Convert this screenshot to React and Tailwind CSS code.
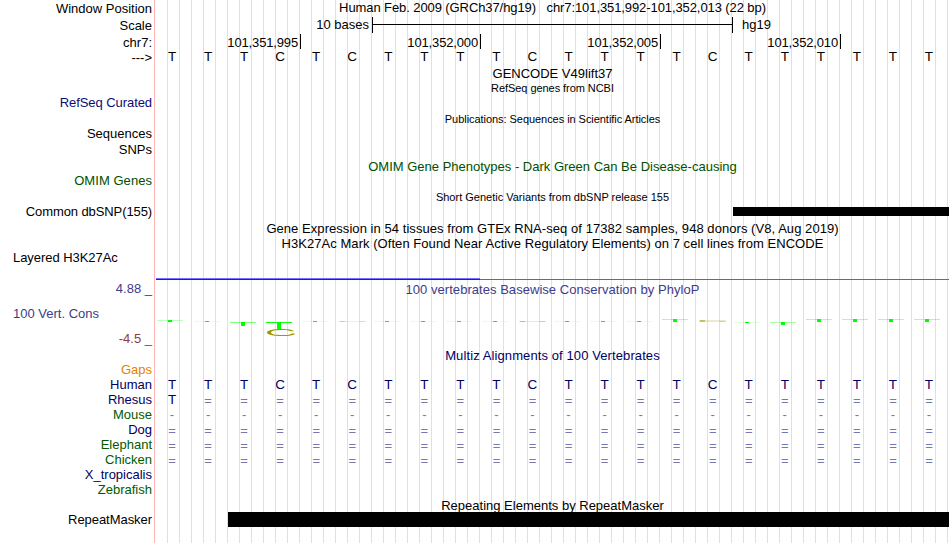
import React from "react";

const labels = [
  { text: "Window Position", gap: "mt-px" },
  { text: "Scale", gap: "mt-[2px]" },
  { text: "chr7:", gap: "mt-[2px]" },
  { text: "--->", gap: "mt-0" },
  { text: "RefSeq Curated", gap: "mt-[30px]", color: "text-[#0c0c78] tracking-[-0.07px]" },
  { text: "Sequences", gap: "mt-4" },
  { text: "SNPs", gap: "mt-px" },
  { text: "OMIM Genes", gap: "mt-4", color: "text-[#005000] tracking-[0.05px]" },
  { text: "Common dbSNP(155)", gap: "mt-4", color: "tracking-[-0.1px]" },
  { text: "Layered H3K27Ac", gap: "mt-[31px]", color: "tracking-[-0.05px]", left: true },
  { text: "4.88 _", gap: "mt-4", color: "text-[#3c3c8c]" },
  { text: "100 Vert. Cons", gap: "mt-[10px]", color: "text-[#3c3c8c]", left: true },
  { text: "-4.5 _", gap: "mt-[10px]", color: "text-[#8c3c3c]" },
  { text: "Gaps", gap: "mt-4", color: "text-[#e68200]" },
  { text: "Human", gap: "mt-0", color: "text-[#000064]" },
  { text: "Rhesus", gap: "mt-0", color: "text-[#000064]" },
  { text: "Mouse", gap: "mt-0", color: "text-[#005a00]" },
  { text: "Dog", gap: "mt-0", color: "text-[#000064]" },
  { text: "Elephant", gap: "mt-0", color: "text-[#005a00]" },
  { text: "Chicken", gap: "mt-0", color: "text-[#005a00]" },
  { text: "X_tropicalis", gap: "mt-0", color: "text-[#000064]" },
  { text: "Zebrafish", gap: "mt-0", color: "text-[#005a00]" },
  { text: "RepeatMasker", gap: "mt-[15px]", color: "tracking-[-0.05px]" },
];

const sequence = "TTTCTCTTTTCTTTTCTTTTTT";
const unaligned = "=".repeat(22);

const alignments = [
  { species: "Human", bases: sequence },
  { species: "Rhesus", bases: "T" + "=".repeat(21) },
  { species: "Mouse", bases: "-".repeat(22) },
  { species: "Dog", bases: unaligned },
  { species: "Elephant", bases: unaligned },
  { species: "Chicken", bases: unaligned },
];

// top: y of the crossbar, stem: height of the stem, alpha: crossbar strength
const flat = { base: "T", top: 24, stem: 1, alpha: 0.1 };
const flatC = { base: "C", top: 24, stem: 1, alpha: 0.5 };
const up = { base: "T", top: 22, stem: 3, alpha: 0.35 };

const conservation = [
  { base: "T", top: 23, stem: 2, alpha: 0.25 },
  flat,
  { base: "T", top: 25, stem: 4, alpha: 0.5 },
  { base: "T", top: 25, stem: 7, alpha: 0.95, ring: true },
  flat,
  { ...flatC, alpha: 0.35 },
  flat,
  flat,
  flat,
  flat,
  flatC,
  flat,
  flat,
  flat,
  up,
  { base: "C", top: 23, stem: 2, alpha: 0.5 },
  { base: "T", top: 25, stem: 1, alpha: 0.12 },
  { base: "T", top: 25, stem: 3, alpha: 0.35 },
  up,
  up,
  up,
  up,
];

function Title({ children, className = "" }) {
  return <div className={`text-center whitespace-pre ${className}`}>{children}</div>;
}

function Bases({ bases, color = "" }) {
  return (
    <div className={`grid grid-cols-22 -ml-[2px] w-[793px] h-[15px] text-center ${color}`}>
      {bases.split("").map((b, i) => (
        <span key={i} className={b === "=" ? "pt-px text-[#7878b0]" : b === "-" ? "text-[#7878a0]" : "text-[13.5px] leading-[15px]"}>{b}</span>
      ))}
    </div>
  );
}

function Conservation() {
  return (
    <svg width="793" height="51" viewBox="0 0 793 51" className="block" shapeRendering="crispEdges">
      {conservation.map((c, i) => {
        const x = i === 0 ? 1 : Math.floor(2 + i * 36.02);
        if (c.base === "C") {
          return (
            <g key={i} fill="#a09600">
              <rect x={x + 1} y={c.top} width="27" height={c.stem} opacity={c.alpha * 0.4} />
              <rect x={x + 2} y={c.top} width="5" height={c.stem} opacity={c.alpha} />
              <rect x={x + 22} y={c.top + c.stem - 1} width="5" height="1" opacity={c.alpha * 0.6} />
            </g>
          );
        }
        return (
          <g key={i} fill="#00ff00">
            <rect x={x} y={c.top} width="26" height="1" opacity={c.alpha} />
            <rect x={x + 11} y={c.top} width="4" height={c.stem} />
            {c.ring && (
              <path
                d="M138 34.2C137 32.8 132 32 126 32C117 32 111 33.3 111 35.5C111 37.7 117 39 126 39C133 39 138.5 38.2 139 36.4H135.5C135 37.5 131 38 126 38C119 38 115 37.2 115 35.5C115 33.8 119 33 126 33C130 33 133.5 33.4 134.5 34.2Z"
                fill="#a09600"
                shapeRendering="auto"
              />
            )}
          </g>
        );
      })}
    </svg>
  );
}

export default function App() {
  return (
    <div className="flex w-[950px] h-[543px] overflow-hidden bg-white text-black text-[13px] leading-[15px] font-['Liberation_Sans',Arial,sans-serif]">
      <div className="flex flex-col w-[154px] shrink-0 pr-[2px]">
        {labels.map((l) => (
          <div key={l.text} className={`h-[15px] whitespace-pre ${l.gap} ${l.color || ""} ${l.left ? "pl-[13px]" : "text-right"}`}>
            {l.text}
          </div>
        ))}
      </div>
      <div className="w-px shrink-0 mr-px bg-[#ffb4b4]" />

      <div className="w-[793px] shrink-0 bg-[repeating-linear-gradient(to_right,transparent_0_11px,#dcdcff_11px_12px)]">
        <Title className="h-[17px] tracking-[-0.09px]">{"Human Feb. 2009 (GRCh37/hg19)   chr7:101,351,992-101,352,013 (22 bp)"}</Title>

        <div className="flex h-[17px]">
          <span className="w-[216px] pr-[3px] text-right">10 bases</span>
          <div className="flex items-center w-[361px] h-4 border-x border-black">
            <div className="w-full h-px -mt-px bg-black" />
          </div>
          <span className="pl-[9px]">hg19</span>
        </div>

        <div className="flex h-[15px] text-right tracking-[-0.15px]">
          <div className="w-[145px] pr-[2px] pt-px border-r border-black">101,351,995</div>
          <div className="w-[180px] pr-[2px] pt-px border-r border-black">101,352,000</div>
          <div className="w-[180px] pr-[2px] pt-px border-r border-black">101,352,005</div>
          <div className="w-[180px] pr-[2px] pt-px border-r border-black">101,352,010</div>
        </div>

        <Bases bases={sequence} />

        <Title className="mt-[2px] h-[15px]">GENCODE V49lift37</Title>
        <Title className="h-[31px] text-[11px] tracking-[-0.06px]">RefSeq genes from NCBI</Title>
        <Title className="h-[47px] text-[11px] tracking-[-0.05px]">Publications: Sequences in Scientific Articles</Title>
        <Title className="h-[31px] text-[#005000]">OMIM Gene Phenotypes - Dark Green Can Be Disease-causing</Title>
        <Title className="h-[17px] text-[11px]">Short Genetic Variants from dbSNP release 155</Title>
        <div className="ml-[577px] h-[9px] bg-black" />

        <Title className="mt-[5px] h-[15px] tracking-[0.055px]">Gene Expression in 54 tissues from GTEx RNA-seq of 17382 samples, 948 donors (V8, Aug 2019)</Title>
        <Title className="h-[42px] tracking-[0.05px]">H3K27Ac Mark (Often Found Near Active Regulatory Elements) on 7 cell lines from ENCODE</Title>
        <div className="w-[324px] h-px bg-[#6e6eff]" />
        <div className="flex h-px">
          <div className="w-[324px] bg-[#3c1e78]" />
          <div className="flex-1 bg-[#786478]" />
        </div>

        <Title className="mt-[2px] h-[15px] text-[#3c3c8c] tracking-[0.04px]">100 vertebrates Basewise Conservation by PhyloP</Title>
        <Conservation />

        <Title className="h-[29px] text-[#000064] tracking-[0.1px]">Multiz Alignments of 100 Vertebrates</Title>
        {alignments.map((a) => (
          <Bases key={a.species} bases={a.bases} color="text-[#000064]" />
        ))}

        <Title className="mt-[31px] h-[14px]">Repeating Elements by RepeatMasker</Title>
        <div className="ml-[72px] h-[15px] bg-black" />
      </div>
    </div>
  );
}
